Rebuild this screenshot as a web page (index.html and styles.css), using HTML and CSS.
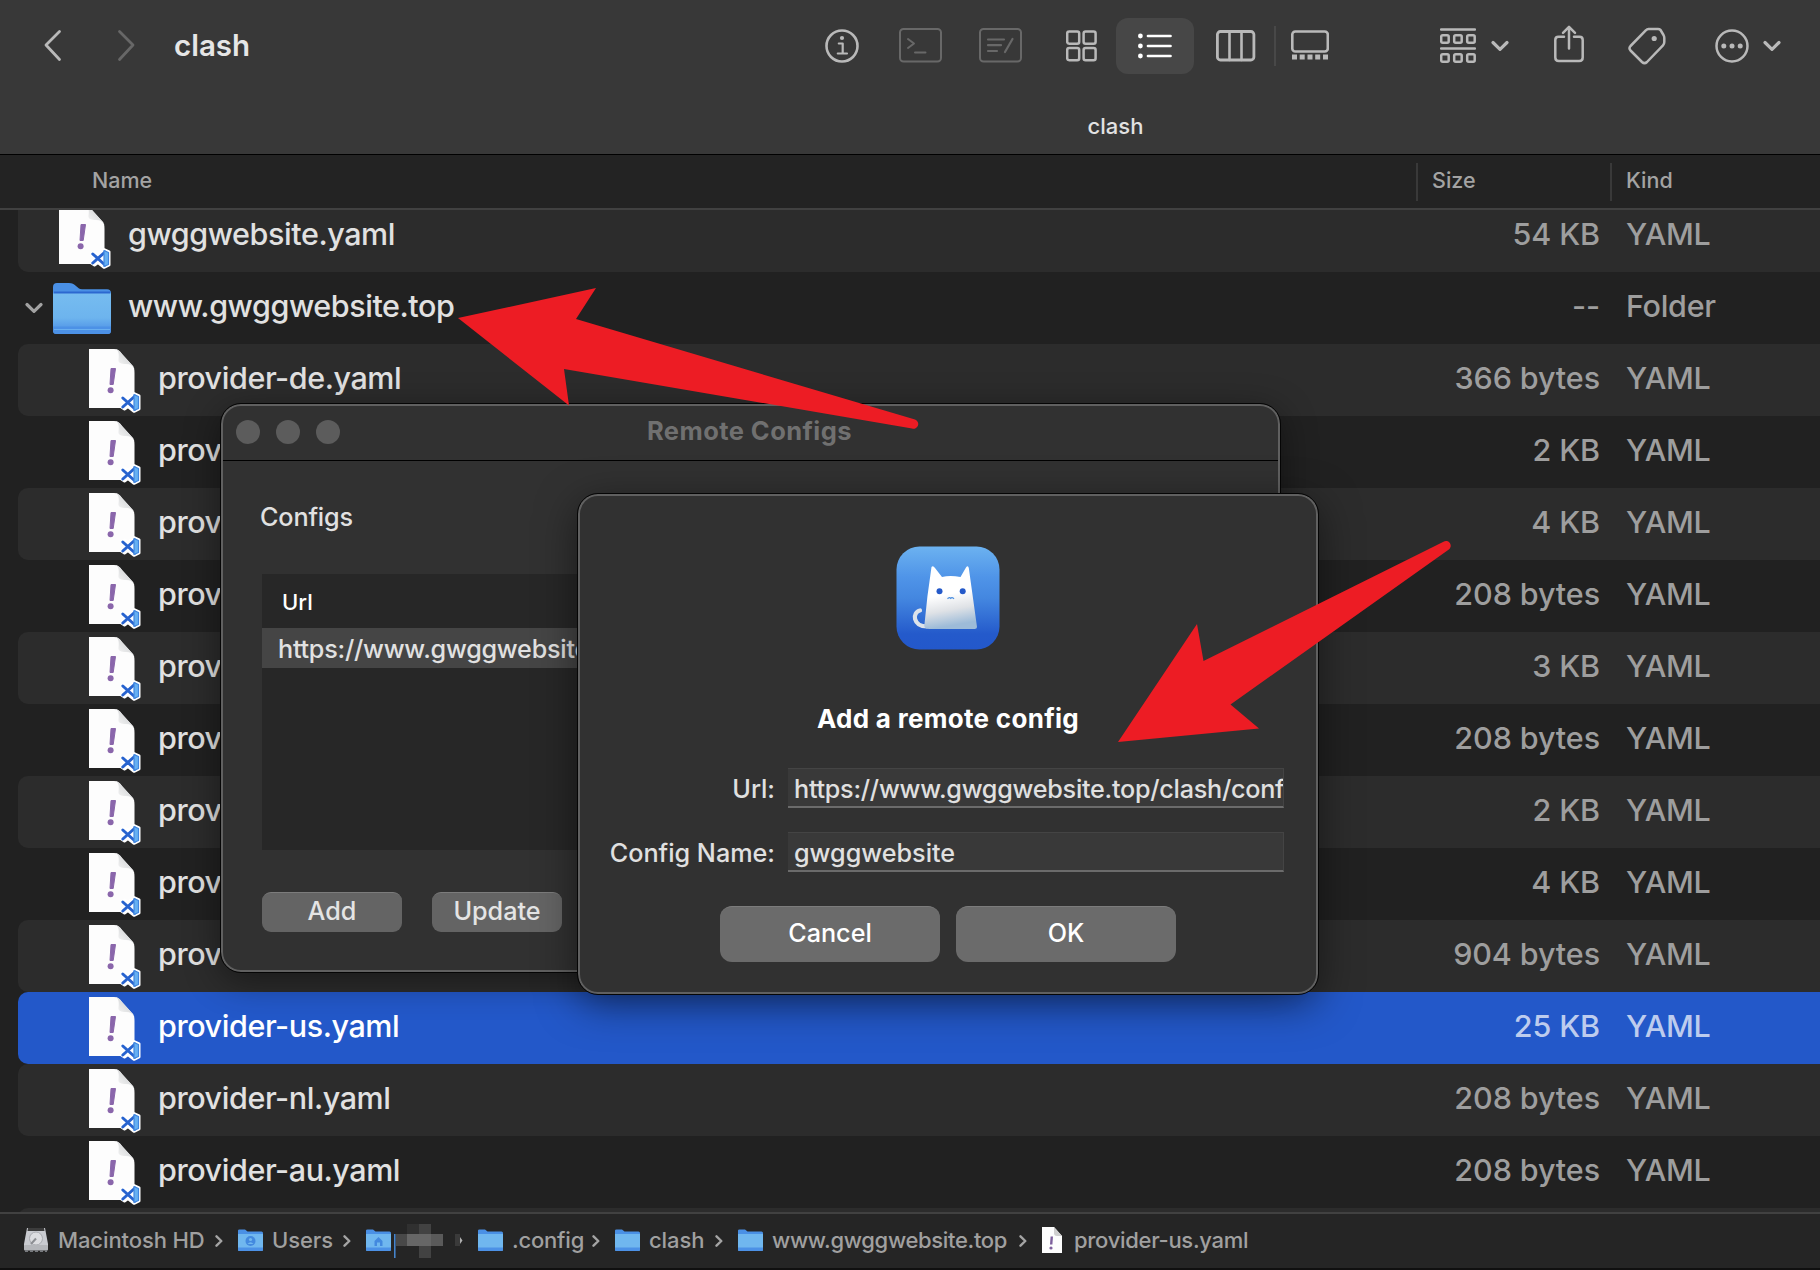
FILE: index.html
```html
<!DOCTYPE html>
<html lang="en">
<head>
<meta charset="utf-8">
<title>clash</title>
<link rel="stylesheet" href="styles.css">
</head>
<body>
<svg class="defs" aria-hidden="true">
  <defs>
    <linearGradient id="folder-front" x1="0" y1="0" x2="0" y2="1">
      <stop offset="0" stop-color="#76bcf0"/><stop offset=".6" stop-color="#6db4ee"/><stop offset=".85" stop-color="#559ae8"/><stop offset="1" stop-color="#4a8fe4"/>
    </linearGradient>
    <linearGradient id="fold" x1="0" y1="1" x2="1" y2="0">
      <stop offset="0" stop-color="#ffffff"/><stop offset="1" stop-color="#c4c6c8"/>
    </linearGradient>
    <linearGradient id="app-bg" x1="0" y1="0" x2="0" y2="1">
      <stop offset="0" stop-color="#6cb2f0"/><stop offset=".3" stop-color="#4f94e8"/><stop offset=".5" stop-color="#4487e0"/><stop offset=".85" stop-color="#245acb"/><stop offset="1" stop-color="#2358cb"/>
    </linearGradient>
    <linearGradient id="cat" x1="0" y1="0" x2=".15" y2="1">
      <stop offset=".5" stop-color="#ffffff"/><stop offset=".75" stop-color="#dfe2e6"/><stop offset="1" stop-color="#9dbbd8"/>
    </linearGradient>
    <symbol id="file" viewBox="0 0 52 64">
      <path d="M0 0H25C29 0 31 2 33 5L43 16C45 18 45.500 20 45.500 24V59H0Z" fill="#fdfdfd"/>
      <path d="M25 0C29 0 30.500 4 29.500 10.500C29 14 32 15 37 15C41 15 44 16.500 45.400 20C45 18 44 17 43 16L33 5C31 2 29 0 25 0Z" fill="url(#fold)"/>
      <path d="M22 19.500h4.500l-2.300 16h-3.200z" fill="#8a66ab" stroke="#8a66ab" stroke-linejoin="round"/>
      <circle cx="21.600" cy="41.200" r="3" fill="#8a66ab"/>
      <path d="M45 44.500L50 46.800V60L45 62.300L39 57.500L35.500 60L32.800 58.300L36.500 53.500L32.800 48.800L35.500 47L39 49.500Z" fill="#fff" stroke="#fff" stroke-width="3" stroke-linejoin="round"/>
      <path d="M33.800 49L46 60M33.800 58L46 47" stroke="#2763cf" stroke-width="3" fill="none" stroke-linecap="round"/>
      <path d="M45 45.500L49.500 47.500V59.500L45 61.500Z" fill="#66b0f2" stroke="#3f86df" stroke-width="1.200" stroke-linejoin="round"/>
    </symbol>
    <symbol id="folder" viewBox="0 0 58 52">
      <path d="M0 4Q0 0 4 0H16C19 0 21 1 23 3L26 5.500Q27 6.200 29 6.200H54Q58 6.200 58 10V20H0Z" fill="#4a90e5"/>
      <path d="M1 8.500H57V12H1Z" fill="#2c68d0"/>
      <path d="M0 10.500H58V47.500Q58 51 54.500 51H3.500Q0 51 0 47.500Z" fill="url(#folder-front)"/>
      <path d="M0 43.500H58V47.500Q58 51 54.500 51H3.500Q0 51 0 47.500Z" fill="#4c91e6"/>
      <path d="M1 46.500H57" stroke="#69aff0"/>
    </symbol>
    <symbol id="folder-sm" viewBox="0 0 25 23">
      <path d="M0 1.500Q0 .5 1.500 .5H7L9.500 2.500H23.500Q25 2.500 25 4V10H0Z" fill="#4a90e5"/>
      <path d="M0 5H25V20.500Q25 22 23.500 22H1.500Q0 22 0 20.500Z" fill="#70b7ef"/>
      <path d="M0 18.500H25V20.500Q25 22 23.500 22H1.500Q0 22 0 20.500Z" fill="#4c91e6"/>
    </symbol>
    <symbol id="chev-down" viewBox="0 0 18 12"><path d="M2 2.500L9 9.300L16 2.500" fill="none" stroke="currentColor" stroke-width="3.200" stroke-linecap="round" stroke-linejoin="round"/></symbol>
    <symbol id="chev-sm" viewBox="0 0 8 12"><path d="M1.500 1.300L6.300 6L1.500 10.700" fill="none" stroke="#a4a4a4" stroke-width="2.400" stroke-linecap="round" stroke-linejoin="round"/></symbol>
  </defs>
</svg>

<div class="finder">
  <header class="toolbar">
    <div class="tools">
      <svg class="back" width="18" height="34" viewBox="0 0 18 34"><path d="M15.500 2.500L2 16L15.500 30.500" /></svg>
      <svg class="forward" width="18" height="34" viewBox="0 0 18 34"><path d="M2.500 2.500L16 16L2.500 30.500"/></svg>
      <h1 class="folder-title">clash</h1>
      <svg class="ico info" width="34" height="34" viewBox="0 0 34 34"><circle cx="17" cy="17" r="15.500" stroke-width="2.600"/><circle cx="17" cy="9" r="2.100" class="solid"/><path d="M13.800 14.500H17.700V24.500M12.800 24.500H22" stroke-width="2.200"/></svg>
      <svg class="ico dim term" width="43" height="35" viewBox="0 0 43 35"><rect x="1" y="1" width="41" height="32.500" rx="3.500" stroke-width="2"/><path d="M9 11L15 15.500L9 20M16 24.500H26.500" stroke-width="2"/></svg>
      <svg class="ico dim edit" width="43" height="35" viewBox="0 0 43 35"><rect x="1" y="1" width="41" height="32.500" rx="3.500" stroke-width="2"/><path d="M9 11.500H25M9 17.200H22M9 23H18M26 24L33.500 11" stroke-width="2.200"/></svg>
      <svg class="ico grid" width="31" height="32" viewBox="0 0 31 32"><g stroke-width="2.500"><rect x="1.200" y="1.500" width="12" height="12.200" rx="2"/><rect x="17.600" y="1.500" width="12" height="12.200" rx="2"/><rect x="1.200" y="18" width="12" height="12.200" rx="2"/><rect x="17.600" y="18" width="12" height="12.200" rx="2"/></g></svg>
      <div class="list-on"><svg class="ico white" width="34" height="28" viewBox="0 0 34 28"><g class="solid"><circle cx="2.400" cy="4" r="2.400"/><circle cx="2.400" cy="14" r="2.400"/><circle cx="2.400" cy="24" r="2.400"/></g><path d="M10 4H32.500M10 14H32.500M10 24H32.500" stroke-width="2.700"/></svg></div>
      <svg class="ico cols" width="40" height="32" viewBox="0 0 40 32"><rect x="1.400" y="1.500" width="36.500" height="28.500" rx="3" stroke-width="2.800"/><path d="M13.500 2V30M25.500 2V30" stroke-width="2.600"/></svg>
      <i class="sep"></i>
      <svg class="ico gallery" width="38" height="32" viewBox="0 0 38 32"><rect x="1.300" y="1.500" width="35.500" height="20" rx="3" stroke-width="2.600"/><g class="solid"><rect x="1" y="24.500" width="5" height="5"/><rect x="8.700" y="24.500" width="5" height="5"/><rect x="16.500" y="24.500" width="5" height="5"/><rect x="24.200" y="24.500" width="5" height="5"/><rect x="32" y="24.500" width="5" height="5"/></g></svg>
      <svg class="ico group" width="36" height="36" viewBox="0 0 36 36"><path d="M1 1.500H35M1 20.500H35" stroke-width="2.400"/><g stroke-width="2.500"><rect x="1.200" y="7.200" width="7.500" height="7.500" rx="1.500"/><rect x="14.200" y="7.200" width="7.500" height="7.500" rx="1.500"/><rect x="27.200" y="7.200" width="7.500" height="7.500" rx="1.500"/><rect x="1.200" y="26.200" width="7.500" height="7.500" rx="1.500"/><rect x="14.200" y="26.200" width="7.500" height="7.500" rx="1.500"/><rect x="27.200" y="26.200" width="7.500" height="7.500" rx="1.500"/></g></svg>
      <svg class="chev" width="18" height="12"><use href="#chev-down"/></svg>
      <svg class="ico share" width="30" height="38" viewBox="0 0 30 38"><path d="M10 11.800H4.500Q1.300 11.800 1.300 15V32.500Q1.300 36 4.800 36H25.200Q28.700 36 28.700 32.500V15Q28.700 11.800 25.500 11.800H20M15 23.500V2M9 7.800L15 1.800L21 7.800" stroke-width="2.500"/></svg>
      <svg class="ico tag" width="38" height="38" viewBox="0 0 38 38"><path d="M20.500 2H30Q31.500 2 32.500 3L35.500 8Q36.300 9.500 36.300 11V15Q36.300 17 35 18.300L19 35Q16.500 37.300 14 35L2.500 23.500Q.5 21.300 2.500 19L18 3.200Q19 2 20.500 2Z" stroke-width="2.500"/><circle cx="26.200" cy="11.500" r="2.600" class="solid"/></svg>
      <svg class="ico more" width="34" height="34" viewBox="0 0 34 34"><circle cx="17" cy="17" r="15.500" stroke-width="2.500"/><g class="solid"><circle cx="8.800" cy="17" r="2.500"/><circle cx="17" cy="17" r="2.500"/><circle cx="25.200" cy="17" r="2.500"/></g></svg>
      <svg class="chev" width="18" height="12"><use href="#chev-down"/></svg>
    </div>
    <div class="tab">clash</div>
  </header>

  <div class="columns">
    <span class="col-name">Name</span>
    <span class="col">Size</span>
    <span class="col">Kind</span>
  </div>

  <main class="list">
    <div class="row top"><svg class="file"><use href="#file"/></svg><span class="name">gwggwebsite.yaml</span><span class="size">54 KB</span><span class="kind">YAML</span></div>
    <div class="row top"><svg class="disclosure" width="18" height="12"><use href="#chev-down"/></svg><svg class="folder"><use href="#folder"/></svg><span class="name">www.gwggwebsite.top</span><span class="size">--</span><span class="kind">Folder</span></div>
    <div class="row"><svg class="file"><use href="#file"/></svg><span class="name">provider-de.yaml</span><span class="size">366 bytes</span><span class="kind">YAML</span></div>
    <div class="row"><svg class="file"><use href="#file"/></svg><span class="name">prov</span><span class="size">2 KB</span><span class="kind">YAML</span></div>
    <div class="row"><svg class="file"><use href="#file"/></svg><span class="name">prov</span><span class="size">4 KB</span><span class="kind">YAML</span></div>
    <div class="row"><svg class="file"><use href="#file"/></svg><span class="name">prov</span><span class="size">208 bytes</span><span class="kind">YAML</span></div>
    <div class="row"><svg class="file"><use href="#file"/></svg><span class="name">prov</span><span class="size">3 KB</span><span class="kind">YAML</span></div>
    <div class="row"><svg class="file"><use href="#file"/></svg><span class="name">prov</span><span class="size">208 bytes</span><span class="kind">YAML</span></div>
    <div class="row"><svg class="file"><use href="#file"/></svg><span class="name">prov</span><span class="size">2 KB</span><span class="kind">YAML</span></div>
    <div class="row"><svg class="file"><use href="#file"/></svg><span class="name">prov</span><span class="size">4 KB</span><span class="kind">YAML</span></div>
    <div class="row"><svg class="file"><use href="#file"/></svg><span class="name">prov</span><span class="size">904 bytes</span><span class="kind">YAML</span></div>
    <div class="row selected"><svg class="file"><use href="#file"/></svg><span class="name">provider-us.yaml</span><span class="size">25 KB</span><span class="kind">YAML</span></div>
    <div class="row"><svg class="file"><use href="#file"/></svg><span class="name">provider-nl.yaml</span><span class="size">208 bytes</span><span class="kind">YAML</span></div>
    <div class="row"><svg class="file"><use href="#file"/></svg><span class="name">provider-au.yaml</span><span class="size">208 bytes</span><span class="kind">YAML</span></div>
    <div class="row"></div>
  </main>

  <footer class="pathbar">
    <div class="crumb c-hd"><svg width="26" height="26" viewBox="0 0 26 26"><path d="M4 1H22L25 17V22H1V17Z" fill="#c9cbd0"/><path d="M5 1H21L21.500 4H4.500Z" fill="#3c3c3c"/><circle cx="13" cy="11.500" r="6.500" fill="#dcdde0" stroke="#a9abb0"/><path d="M13 11.500L8 17" stroke="#8c8e92" stroke-width="2"/><rect x="1" y="18" width="24" height="5.500" rx="1" fill="#b4b6ba"/><path d="M2 24H24" stroke="#77797d" stroke-width="2" stroke-dasharray="3 2"/></svg><span>Macintosh HD</span><svg class="next"><use href="#chev-sm"/></svg></div>
    <div class="crumb c-users"><svg width="25" height="23" viewBox="0 0 25 23"><use href="#folder-sm"/><circle cx="12.500" cy="12" r="5" fill="#4389df"/><circle cx="12.500" cy="10.500" r="1.600" fill="#70b7ef"/><path d="M9.500 15Q12.500 11.500 15.500 15Z" fill="#70b7ef"/></svg><span>Users</span><svg class="next"><use href="#chev-sm"/></svg></div>
    <div class="crumb c-home"><svg width="25" height="23" viewBox="0 0 25 23"><use href="#folder-sm"/><path d="M8.500 12L12.500 8L16.500 12V17H14V13.500H11V17H8.500Z" fill="#4389df"/></svg>
      <svg class="mosaic" width="69" height="34" viewBox="0 0 69 34"><path d="M.8 10V34" stroke="#4a8fe0" stroke-width="1.400"/><rect x="13" width="12" height="10" fill="#303030"/><rect x="25" width="12" height="34" fill="#424242"/><rect x="2" y="10" width="11" height="12" fill="#484848"/><rect x="13" y="10" width="24" height="12" fill="#666"/><rect x="37" y="10" width="12" height="12" fill="#5a5a5a"/><rect x="61" y="10" width="5" height="12" fill="#3a3a3a"/><path d="M66 13L68.500 16.500L66 20Z" fill="#b0b0b0"/></svg></div>
    <div class="crumb c-config"><svg width="25" height="23"><use href="#folder-sm"/></svg><span>.config</span><svg class="next"><use href="#chev-sm"/></svg></div>
    <div class="crumb c-clash"><svg width="25" height="23"><use href="#folder-sm"/></svg><span>clash</span><svg class="next"><use href="#chev-sm"/></svg></div>
    <div class="crumb c-www"><svg width="25" height="23"><use href="#folder-sm"/></svg><span>www.gwggwebsite.top</span><svg class="next"><use href="#chev-sm"/></svg></div>
    <div class="crumb c-file"><svg width="20" height="27" viewBox="0 0 20 27"><path d="M0 0H12L20 9V26H0Z" fill="#fdfdfd"/><path d="M12 0V6Q12 9 15 9H20Z" fill="#cfcfcf"/><path d="M9.800 9.500L9.200 17.500" stroke="#7d5f9c" stroke-width="2.400"/><circle cx="9" cy="21" r="1.600" fill="#7d5f9c"/></svg><span>provider-us.yaml</span></div>
  </footer>
</div>

<section class="window remote">
  <div class="titlebar"><i></i><i></i><i></i><b>Remote Configs</b></div>
  <div class="remote-body">
    <div class="remote-label">Configs</div>
    <div class="table"><div class="th">Url</div><div class="td">https://www.gwggwebsite</div></div>
    <div class="remote-actions"><button class="btn-add">Add</button><button class="btn-update">Update</button></div>
  </div>
</section>

<section class="window dialog">
  <svg class="app" width="104" height="104" viewBox="0 0 104 104"><rect x=".5" y=".5" width="103" height="103" rx="23" fill="url(#app-bg)"/><path d="M24 64.500C16 66 16.500 80.500 31 80.500" fill="none" stroke="#dde3ea" stroke-width="4.200" stroke-linecap="round"/><path d="M35.500 21Q37 19 39 22L46 31Q54 29 64.500 31L70 21.500Q72 19 72.800 22L81 81Q81 83 78.500 83H33Q27 82.500 28.500 78Q31 50 35.500 21Z" fill="url(#cat)"/><circle cx="43.500" cy="45.200" r="3" fill="#2459c9"/><circle cx="66.700" cy="45.200" r="3" fill="#2459c9"/><path d="M51.500 52.800Q53.500 50.800 54.700 52.300Q56 50.800 58 52.800" fill="none" stroke="#4a8ee0" stroke-width="1.300"/></svg>
  <h2>Add a remote config</h2>
  <div class="form">
    <label class="l-url">Url:</label><div class="field f-url">https://www.gwggwebsite.top/clash/conf</div>
    <label class="l-name">Config Name:</label><div class="field f-name">gwggwebsite</div>
  </div>
  <div class="dialog-actions"><button>Cancel</button><button>OK</button></div>
</section>

<svg class="arrows" width="1820" height="1270" viewBox="0 0 1820 1270">
  <path d="M458 318L596 288L576 319L915 419.500A4.600 4.600 0 0 1 912 428.500L564 369L569 405.500Z"/>
  <path d="M1118 742L1197 624L1203.500 661L1443.500 541.700A4.600 4.600 0 0 1 1448.500 549.700L1230.500 704.500L1259 728.500Z"/>
</svg>
</body>
</html>
```
FILE: styles.css
```css
* { box-sizing: border-box; }
body {
  margin: 0;
  width: 1820px;
  height: 1270px;
  overflow: hidden;
  position: relative;
  background: #212121;
  color: #e0e0e0;
  font-family: Inter, "Liberation Sans", sans-serif;
  font-weight: 450;
}
h1, h2 { margin: 0; }
svg { display: block; flex: none; }
.defs { position: absolute; width: 0; height: 0; }
.finder { display: flex; flex-direction: column; height: 1270px; }

/* Toolbar */
.toolbar { height: 155px; background: #383838; border-bottom: 1px solid #000; }
.tools { display: flex; align-items: center; height: 91px; padding-left: 44px; }
.back, .forward { fill: none; stroke: #b9b9b9; stroke-width: 2.8; stroke-linecap: round; stroke-linejoin: round; }
.forward { stroke: #676767; margin-left: 55px; }
.folder-title { width: 651px; margin: -2px 0 0 39px; font-size: 29.5px; line-height: 40px; font-weight: 600; color: #e6e6e6; }
.ico { fill: none; stroke: #b9b9b9; stroke-linecap: round; stroke-linejoin: round; }
.ico .solid { fill: #b9b9b9; stroke: none; }
.ico.dim { stroke: #686868; }
.ico.white { stroke: #fff; }
.ico.white .solid { fill: #fff; }
.term { margin-left: 40px; }
.edit { margin-left: 37px; }
.grid { margin-left: 44px; }
.list-on { display: flex; align-items: center; justify-content: center; width: 78px; height: 56px; margin-left: 19px; border-radius: 12px; background: #474747; }
.cols { margin-left: 22px; }
.sep { width: 2px; height: 40px; margin-left: 18px; background: #484848; }
.gallery { margin-left: 15px; }
.group { margin-left: 111px; }
.chev { color: #b9b9b9; margin-left: 15px; }
.share { margin: -4px 0 0 45px; }
.tag { margin-left: 44px; }
.more { margin-left: 49px; }
.more + .chev { margin-left: 14px; }
.tab { padding-left: 411px; text-align: center; font-size: 22px; line-height: 70px; height: 63px; color: #e2e2e2; }

/* Column header */
.columns { display: grid; grid-template-columns: 1324px 194px 1fr; align-items: center; height: 55px; padding-left: 92px; border-bottom: 2px solid #414141; background: #232323; color: #a3a3a3; font-size: 21.5px; }
.col { height: 38px; line-height: 34px; padding-left: 14px; border-left: 2px solid #393939; }
.col-name { line-height: 34px; height: 38px; }

/* File list */
.list { flex: 1; height: 1002px; margin-top: -10px; overflow: hidden; clip-path: inset(10px 0 0 0); }
.row { display: flex; align-items: center; height: 72px; margin-left: 18px; padding-left: 71px; border-radius: 10px 0 0 10px; font-size: 30.5px; }
.row:nth-child(odd) { background: #2c2c2c; }
.row.top { padding-left: 41px; }
.row.selected { background: #2358c9; }
.row .file { width: 52px; height: 64px; margin-right: 17px; margin-top: 2px; }
.row .folder { width: 58px; height: 52px; margin: 2px 17px 0 0; }
.row .disclosure { width: 18px; height: 12px; color: #a2a2a2; margin: 0 10px 0 -34px; }
.row .name { flex: 1; height: 72px; line-height: 68px; letter-spacing: -0.43px; color: #e1e1e1; white-space: nowrap; }
.row .size { width: 300px; height: 72px; line-height: 68px; text-align: right; letter-spacing: -0.1px; color: #9e9e9e; }
.row .kind { width: 194px; height: 72px; line-height: 68px; margin-left: 26px; letter-spacing: -0.3px; color: #9e9e9e; }
.row.selected .name { color: #fff; }
.row.selected .size, .row.selected .kind { color: #bdccee; }

/* Path bar */
.pathbar { display: flex; align-items: center; height: 58px; padding: 0 0 2px 23px; border-top: 2px solid #414141; border-bottom: 2px solid #101010; background: #252525; color: #a0a0a0; font-size: 22px; letter-spacing: -0.1px; }
.crumb { display: flex; align-items: center; white-space: nowrap; }
.crumb span { margin-left: 9px; line-height: 30px; }
.next { width: 8px; height: 12px; margin: 1px 15px 0 auto; }
.c-hd { width: 215px; }
.c-users { width: 128px; }
.c-home { width: 112px; }
.c-config { width: 137px; letter-spacing: -0.2px; }
.c-clash { width: 123px; }
.c-www { width: 304px; letter-spacing: -0.33px; }
.c-www .next { margin-left: 12px; }
.c-file { letter-spacing: -0.3px; }
.crumb.c-file span { margin-left: 12px; }
.mosaic { margin: 2px 0 0 3px; }

/* Windows */
.window { position: absolute; border: 2px solid #606060; outline: 1px solid #050505; background: #313131; }
.remote { left: 221px; top: 404px; width: 1059px; height: 568px; border-radius: 20px; box-shadow: 0 8px 36px rgba(0,0,0,.45); }
.titlebar { display: flex; align-items: center; gap: 16px; height: 55px; padding: 0 0 3px 13px; border-bottom: 1px solid #000; }
.titlebar i { width: 24px; height: 24px; border-radius: 50%; background: #5c5c5c; }
.titlebar b { margin: -2px 0 0 291px; font-size: 25.5px; line-height: 30px; letter-spacing: .43px; color: #707070; }
.remote-body { padding: 38px 39px 0; }
.remote-label { margin-left: -2px; font-size: 25.2px; line-height: 36px; height: 75px; letter-spacing: -0.15px; color: #e1e1e1; }
.table { height: 276px; width: 980px; background: #272727; }
.th { height: 54px; padding-left: 20px; font-size: 22px; line-height: 56px; color: #fff; }
.td { height: 40px; padding-left: 16px; font-size: 25.2px; line-height: 42px; letter-spacing: -0.24px; background: #454545; color: #e1e1e1; white-space: nowrap; }
.remote-actions { display: flex; gap: 30px; margin-top: 42px; }
button { padding: 0; border: 0; border-top: 1px solid #7c7c7c; background: #646464; color: #e4e4e4; font-family: inherit; font-weight: 450; }
.remote-actions button { height: 40px; padding-bottom: 4px; border-radius: 9px; font-size: 25.2px; line-height: 34px; }
.btn-add { width: 140px; }
.btn-update { width: 130px; }

.dialog { left: 578px; top: 494px; width: 740px; height: 500px; border-radius: 20px; box-shadow: 0 10px 40px rgba(0,0,0,.5); display: flex; flex-direction: column; align-items: center; padding-top: 50px; }
.dialog h2 { margin-top: 49px; font-size: 26px; line-height: 40px; font-weight: 700; letter-spacing: .3px; color: #fff; white-space: nowrap; }
.form { display: grid; grid-template-columns: 195px 496px; column-gap: 13px; row-gap: 24px; margin: 29px 0 0 0; align-self: flex-start; }
label { display: block; height: 40px; text-align: right; font-size: 25.2px; line-height: 42px; white-space: nowrap; }
.field { height: 40px; padding-left: 6px; overflow: hidden; border: 1px solid #444; border-bottom: 2px solid #6b6b6b; border-left-width: 0; background: #393939; font-size: 25.2px; line-height: 40px; white-space: nowrap; }
.f-url { letter-spacing: -0.26px; }
.dialog-actions { display: flex; gap: 16px; margin-top: 34px; }
.dialog-actions button { width: 220px; height: 56px; padding-bottom: 3px; border-radius: 12px; background: #6b6b6b; color: #fff; font-size: 25.2px; line-height: 50px; }

.arrows { position: absolute; left: 0; top: 0; fill: #ed1c24; }
```
